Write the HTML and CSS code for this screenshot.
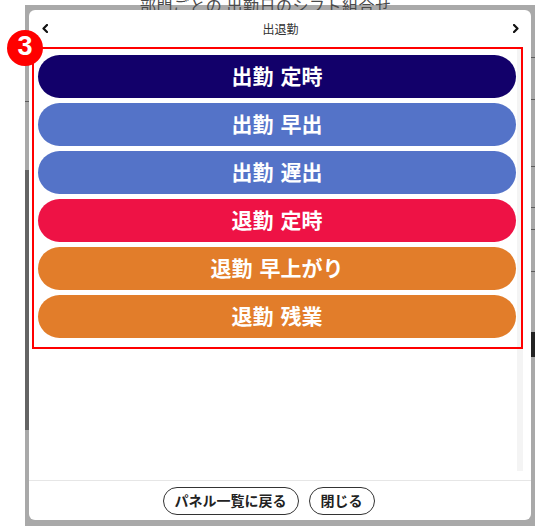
FILE: index.html
```html
<!DOCTYPE html>
<html lang="ja">
<head>
  <meta charset="UTF-8" />
  <title>出退勤</title>
  <meta name="viewport" content="width=device-width, initial-scale=1.0"/>
  <link rel="stylesheet" href="styles.css">
</head>
<body>

  <div class="page-title">部門ごとの 出勤日のシフト組合せ</div>

  <div class="backdrop">
    <div class="strip strip-left">
      <div class="row"></div>
      <div class="gap"></div>
      <div class="dark"></div>
    </div>

    <div class="modal">
      <div class="modal-head">
        <svg class="chev" width="6" height="9" viewBox="0 0 6 9"><path d="M5 1 L1.5 4.5 L5 8" /></svg>
        <span class="modal-title">出退勤</span>
        <svg class="chev" width="6" height="9" viewBox="0 0 6 9"><path d="M1 1 L4.5 4.5 L1 8" /></svg>
      </div>

      <div class="modal-body">
        <div class="panel-list">
          <button class="punch punch-navy">出勤 定時</button>
          <button class="punch punch-blue">出勤 早出</button>
          <button class="punch punch-blue">出勤 遅出</button>
          <button class="punch punch-red">退勤 定時</button>
          <button class="punch punch-orange">退勤 早上がり</button>
          <button class="punch punch-orange">退勤 残業</button>
        </div>
        <div class="scroll-track"></div>
      </div>

      <div class="modal-foot">
        <button class="pill">パネル一覧に戻る</button>
        <button class="pill">閉じる</button>
      </div>

      <!-- step marker over the panel list -->
      <div class="focus-box"></div>
      <span class="step-badge">3</span>
    </div>

    <div class="strip strip-right">
      <div class="row"></div>
      <div class="row"></div>
      <div class="row"></div>
      <div class="row"></div>
      <div class="row"></div>
      <div class="row"></div>
      <div class="gap"></div>
      <div class="dark"></div>
    </div>
  </div>

</body>
</html>
```

FILE: styles.css
```css
body {
  margin: 0;
  background: #fff;
  font-family: "Noto Sans CJK JP", "Noto Sans", sans-serif;
  color: #333;
}

/* heading of the page behind the dialog */
.page-title {
  position: relative;
  z-index: 1;
  height: 8px;
  margin-top: -3px;
  padding-left: 140px;
  font-size: 16px;
  letter-spacing: 0.5px;
  line-height: 16px;
  color: #4a4a4a;
  white-space: nowrap;
}

.backdrop {
  display: flex;
  width: 510px;
  height: 521px;
  margin-left: 25px;
  background: #a9a9a9;
}

.strip {
  width: 4px;
  display: flex;
  flex-direction: column;
}

.strip .row {
  border-bottom: 1px solid #5c5c5c;
}

.strip-left .row { height: 96px; }
.strip-left .gap { height: 68px; }
.strip-left .dark { height: 260px; background: #646464; }

.strip-right .row:nth-child(1) { height: 52px; }
.strip-right .row:nth-child(2) { height: 41px; }
.strip-right .row:nth-child(3) { height: 66px; }
.strip-right .row:nth-child(4) { height: 40px; }
.strip-right .row:nth-child(5) { height: 21px; }
.strip-right .row:nth-child(6) { height: 41px; }
.strip-right .gap { height: 60px; }
.strip-right .dark { height: 25px; background: #222; }

/* dialog */
.modal {
  position: relative;
  z-index: 2;
  width: 502px;
  height: 510px;
  margin-top: 5px;
  background: #fff;
  border-radius: 6px;
  display: flex;
  flex-direction: column;
}

.modal-head {
  height: 37px;
  display: flex;
  align-items: center;
  justify-content: space-between;
  padding: 0 12px 0 13px;
}

.chev path {
  fill: none;
  stroke: #111;
  stroke-width: 2.2;
  stroke-linecap: round;
  stroke-linejoin: round;
}

.modal-title {
  font-size: 12px;
  color: #333;
}

.modal-body {
  flex: 1;
  display: flex;
  gap: 1px;
  padding: 8px 8px 0 9px;
}

.panel-list {
  flex: 1;
  display: flex;
  flex-direction: column;
  gap: 5px;
}

.scroll-track {
  width: 6px;
  height: 423px;
  margin-top: -7px;
  background: #f4f4f4;
}

.punch {
  height: 43px;
  padding: 0 0 4px;
  border: none;
  border-radius: 22px;
  font-family: "Noto Sans CJK JP", sans-serif;
  font-size: 21px;
  font-weight: 700;
  word-spacing: 2px;
  color: #fff;
  cursor: pointer;
}

.punch-navy { background: #12006a; }
.punch-blue { background: #5473c8; }
.punch-red { background: #ee1245; }
.punch-orange { background: #e27d2a; }

.modal-foot {
  height: 39px;
  border-top: 1px solid #e6e6e6;
  display: flex;
  align-items: center;
  justify-content: center;
  gap: 10px;
  padding-right: 23px;
}

.pill {
  height: 28px;
  padding: 0 11px 2px;
  border: 1.5px solid #333;
  border-radius: 14px;
  background: #fff;
  font-family: "Noto Sans CJK JP", sans-serif;
  font-size: 14px;
  font-weight: 700;
  color: #222;
  cursor: pointer;
}

.focus-box {
  position: absolute;
  left: 3px;
  top: 37px;
  width: 487px;
  height: 298px;
  border: 2px solid #f00;
  pointer-events: none;
}

.step-badge {
  position: absolute;
  left: -22px;
  top: 20px;
  width: 36px;
  height: 36px;
  border-radius: 50%;
  background: #f00;
  color: #fff;
  font-family: "Liberation Sans", Arial, sans-serif;
  font-size: 27px;
  font-weight: 700;
  line-height: 33px;
  text-align: center;
}
```
